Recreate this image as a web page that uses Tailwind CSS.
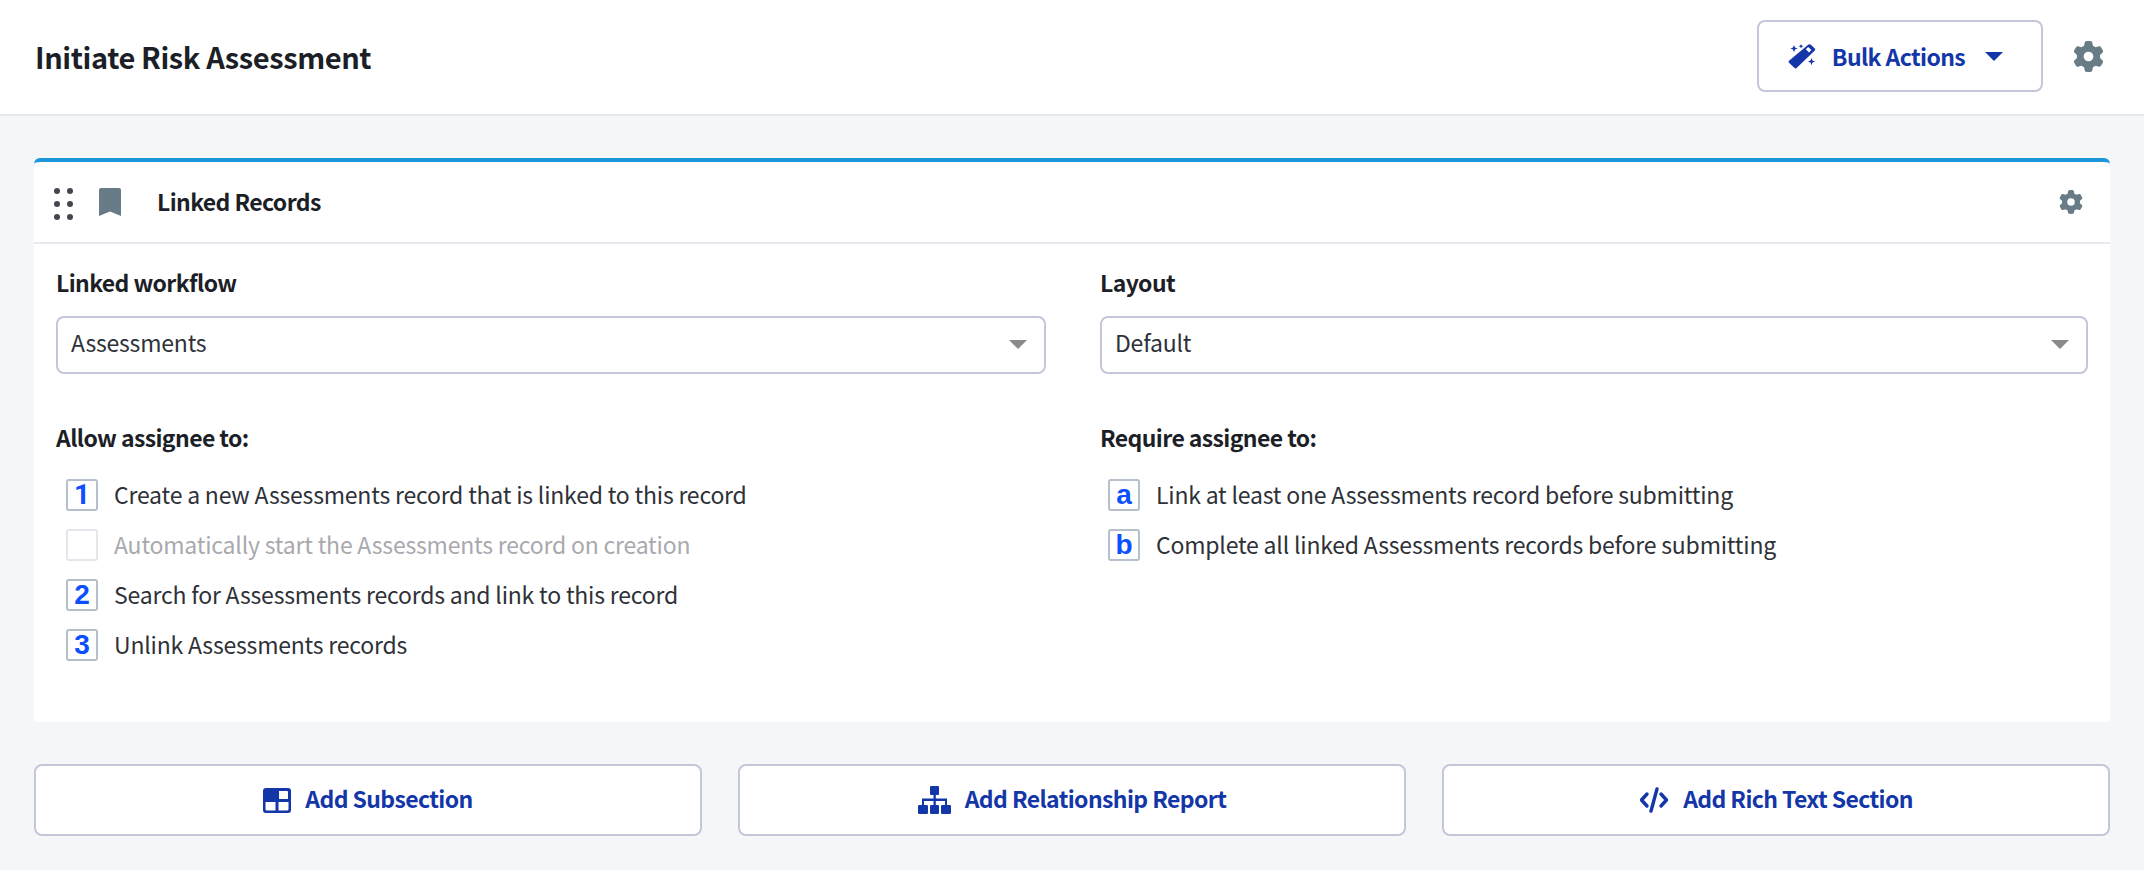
<!DOCTYPE html>
<html lang="en">
<head>
    <meta charset="UTF-8">
    <title>Initiate Risk Assessment</title>
    <script src="https://cdn.jsdelivr.net/npm/@tailwindcss/browser@4"></script>
</head>
<body class="h-[870px] overflow-hidden bg-[#f5f6f8] font-['Noto_Sans_CJK_JP',sans-serif] text-[#1c1f27]">
    <!-- page header -->
    <header class="h-[116px] bg-white border-b-2 border-[#e6e9f0] flex items-center justify-between pl-[35px] pr-[40px]">
        <h1 class="text-[29px] leading-[40px] font-bold tracking-[-0.4px] -mt-[3px]">Initiate Risk Assessment</h1>
        <div class="flex items-center gap-[30px] -mt-[2px]">
            <button class="w-[286px] h-[72px] bg-white border-2 border-[#c3c8d9] rounded-[8px] flex items-center justify-center text-[#1336a8] text-[23px] font-bold tracking-[-0.6px]">
                <svg class="w-[28px] h-[25px] mr-[16px]" viewBox="0 0 28 25" fill="#1336a8">
                    <path fill-rule="evenodd" d="M20.5 .6 a1.5 1.5 0 0 1 2 0 L26.8 4.6 a1.5 1.5 0 0 1 0 2 L8.6 24 a1.5 1.5 0 0 1 -2 0 L1 18.8 a1.5 1.5 0 0 1 0 -2 Z M20.2 3 L17.8 5.3 L21 8.4 L23.4 6 Z"/>
                    <path d="M6 1 l1 2.6 l2.6 1 l-2.6 1 l-1 2.6 l-1 -2.6 l-2.6 -1 l2.6 -1 Z M13 0 l.7 1.6 l1.6 .7 l-1.6 .7 l-.7 1.6 l-.7 -1.6 l-1.6 -.7 l1.6 -.7 Z M23.5 14 l1 2.6 l2.6 1 l-2.6 1 l-1 2.6 l-1 -2.6 l-2.6 -1 l2.6 -1 Z"/>
                </svg>
                <span>Bulk Actions</span>
                <span class="ml-[20px] mr-[9px] w-0 h-0 border-x-[9px] border-x-transparent border-t-[9px] border-t-[#1336a8]"></span>
            </button>
            <svg class="w-[31px] h-[31px]" viewBox="0 0 512 512" fill="#687c87"><path d="M495.9 166.6c3.2 8.7 .5 18.4-6.4 24.6l-43.3 39.4c1.1 8.3 1.7 16.8 1.7 25.4s-.6 17.1-1.7 25.4l43.3 39.4c6.9 6.2 9.6 15.9 6.4 24.6c-4.4 11.9-9.7 23.3-15.8 34.3l-4.7 8.1c-6.6 11-14 21.4-22.1 31.2c-5.9 7.2-15.7 9.6-24.5 6.8l-55.7-17.7c-13.4 10.3-28.2 18.9-44 25.4l-12.5 57.1c-2 9.1-9 16.3-18.2 17.8c-13.8 2.3-28 3.5-42.5 3.5s-28.7-1.2-42.5-3.5c-9.2-1.5-16.2-8.7-18.2-17.8l-12.5-57.1c-15.8-6.5-30.6-15.1-44-25.4L83.1 425.9c-8.8 2.8-18.6 .3-24.5-6.8c-8.1-9.8-15.5-20.2-22.1-31.2l-4.7-8.1c-6.1-11-11.4-22.4-15.8-34.3c-3.2-8.7-.5-18.4 6.4-24.6l43.3-39.4C64.6 273.1 64 264.6 64 256s.6-17.1 1.7-25.4L22.4 191.2c-6.9-6.2-9.6-15.9-6.4-24.6c4.4-11.9 9.7-23.3 15.8-34.3l4.7-8.1c6.6-11 14-21.4 22.1-31.2c5.9-7.2 15.7-9.6 24.5-6.8l55.7 17.7c13.4-10.3 28.2-18.9 44-25.4l12.5-57.1c2-9.1 9-16.3 18.2-17.8C227.3 1.2 241.5 0 256 0s28.7 1.2 42.5 3.5c9.2 1.5 16.2 8.7 18.2 17.8l12.5 57.1c15.8 6.5 30.6 15.1 44 25.4l55.7-17.7c8.8-2.8 18.6-.3 24.5 6.8c8.1 9.8 15.5 20.2 22.1 31.2l4.7 8.1c6.1 11 11.4 22.4 15.8 34.3zM256 336a80 80 0 1 0 0-160 80 80 0 1 0 0 160z"/></svg>
        </div>
    </header>

    <main class="px-[34px] pt-[42px]">
        <!-- linked records card -->
        <section class="h-[564px] bg-white border-t-4 border-[#1a96d9] rounded-t-[6px] rounded-b-[4px]">
            <div class="h-[82px] border-b-2 border-[#e6e9f0] flex items-center pl-[20px] pr-[27px]">
                <div class="grid grid-cols-2 gap-x-[7px] gap-y-[7px] w-[19px] mt-[3px]">
                    <span class="w-[6px] h-[6px] rounded-full bg-[#43464f]"></span><span class="w-[6px] h-[6px] rounded-full bg-[#43464f]"></span>
                    <span class="w-[6px] h-[6px] rounded-full bg-[#43464f]"></span><span class="w-[6px] h-[6px] rounded-full bg-[#43464f]"></span>
                    <span class="w-[6px] h-[6px] rounded-full bg-[#43464f]"></span><span class="w-[6px] h-[6px] rounded-full bg-[#43464f]"></span>
                </div>
                <svg class="w-[22px] h-[28px] ml-[26px]" viewBox="0 0 22 28" fill="#687c87"><path d="M2 0 H20 a2 2 0 0 1 2 2 V28 L11 23.5 L0 28 V2 a2 2 0 0 1 2 -2 Z"/></svg>
                <h2 class="ml-[36px] text-[23px] leading-[32px] font-bold tracking-[-0.6px] -mt-[2px]">Linked Records</h2>
                <svg class="ml-auto w-[24px] h-[24px]" viewBox="0 0 512 512" fill="#687c87"><path d="M495.9 166.6c3.2 8.7 .5 18.4-6.4 24.6l-43.3 39.4c1.1 8.3 1.7 16.8 1.7 25.4s-.6 17.1-1.7 25.4l43.3 39.4c6.9 6.2 9.6 15.9 6.4 24.6c-4.4 11.9-9.7 23.3-15.8 34.3l-4.7 8.1c-6.6 11-14 21.4-22.1 31.2c-5.9 7.2-15.7 9.6-24.5 6.8l-55.7-17.7c-13.4 10.3-28.2 18.9-44 25.4l-12.5 57.1c-2 9.1-9 16.3-18.2 17.8c-13.8 2.3-28 3.5-42.5 3.5s-28.7-1.2-42.5-3.5c-9.2-1.5-16.2-8.7-18.2-17.8l-12.5-57.1c-15.8-6.5-30.6-15.1-44-25.4L83.1 425.9c-8.8 2.8-18.6 .3-24.5-6.8c-8.1-9.8-15.5-20.2-22.1-31.2l-4.7-8.1c-6.1-11-11.4-22.4-15.8-34.3c-3.2-8.7-.5-18.4 6.4-24.6l43.3-39.4C64.6 273.1 64 264.6 64 256s.6-17.1 1.7-25.4L22.4 191.2c-6.9-6.2-9.6-15.9-6.4-24.6c4.4-11.9 9.7-23.3 15.8-34.3l4.7-8.1c6.6-11 14-21.4 22.1-31.2c5.9-7.2 15.7-9.6 24.5-6.8l55.7 17.7c13.4-10.3 28.2-18.9 44-25.4l12.5-57.1c2-9.1 9-16.3 18.2-17.8C227.3 1.2 241.5 0 256 0s28.7 1.2 42.5 3.5c9.2 1.5 16.2 8.7 18.2 17.8l12.5 57.1c15.8 6.5 30.6 15.1 44 25.4l55.7-17.7c8.8-2.8 18.6-.3 24.5 6.8c8.1 9.8 15.5 20.2 22.1 31.2l4.7 8.1c6.1 11 11.4 22.4 15.8 34.3zM256 336a80 80 0 1 0 0-160 80 80 0 1 0 0 160z"/></svg>
            </div>

            <div class="grid grid-cols-[990px_988px] gap-x-[54px] px-[22px] pt-[23px]">
                <!-- left column -->
                <div>
                    <label class="block text-[23px] leading-[30px] font-bold tracking-[-0.6px]">Linked workflow</label>
                    <div class="mt-[19px] h-[58px] border-2 border-[#c3c8d9] rounded-[8px] flex items-center justify-between pl-[13px] pr-[17px] text-[23px] tracking-[-0.2px] text-[#2e3138]">
                        <span class="-mt-[5px]">Assessments</span>
                        <span class="w-0 h-0 border-x-[9px] border-x-transparent border-t-[9px] border-t-[#8a8a8a] -mt-[2px]"></span>
                    </div>
                    <h3 class="mt-[48px] text-[23px] leading-[30px] font-bold tracking-[-0.6px]">Allow assignee to:</h3>
                    <ul class="mt-[27px] pl-[10px] flex flex-col gap-[18px] text-[23px] tracking-[-0.2px] text-[#2e3138]">
                        <li class="h-[32px] flex items-center gap-[16px]">
                            <span class="w-[32px] h-[32px] bg-white border-2 border-[#b6bfcc] rounded-[3px] flex items-center justify-center font-['Roboto',sans-serif] font-bold text-[28px] leading-none tracking-normal text-[#0b4fff]">1</span>
                            <span class="-mt-[1px]">Create a new Assessments record that is linked to this record</span>
                        </li>
                        <li class="h-[32px] flex items-center gap-[16px] text-[#a8a9ae]">
                            <span class="w-[32px] h-[32px] bg-white border-2 border-[#e3e6ec] rounded-[3px]"></span>
                            <span class="-mt-[1px]">Automatically start the Assessments record on creation</span>
                        </li>
                        <li class="h-[32px] flex items-center gap-[16px]">
                            <span class="w-[32px] h-[32px] bg-white border-2 border-[#b6bfcc] rounded-[3px] flex items-center justify-center font-['Liberation_Sans',sans-serif] font-bold text-[28px] leading-none tracking-normal text-[#0b4fff]">2</span>
                            <span class="-mt-[1px]">Search for Assessments records and link to this record</span>
                        </li>
                        <li class="h-[32px] flex items-center gap-[16px]">
                            <span class="w-[32px] h-[32px] bg-white border-2 border-[#b6bfcc] rounded-[3px] flex items-center justify-center font-['Liberation_Sans',sans-serif] font-bold text-[28px] leading-none tracking-normal text-[#0b4fff]">3</span>
                            <span class="-mt-[1px]">Unlink Assessments records</span>
                        </li>
                    </ul>
                </div>
                <!-- right column -->
                <div>
                    <label class="block text-[23px] leading-[30px] font-bold tracking-[-0.6px]">Layout</label>
                    <div class="mt-[19px] h-[58px] border-2 border-[#c3c8d9] rounded-[8px] flex items-center justify-between pl-[13px] pr-[17px] text-[23px] tracking-[-0.2px] text-[#2e3138]">
                        <span class="-mt-[5px]">Default</span>
                        <span class="w-0 h-0 border-x-[9px] border-x-transparent border-t-[9px] border-t-[#8a8a8a] -mt-[2px]"></span>
                    </div>
                    <h3 class="mt-[48px] text-[23px] leading-[30px] font-bold tracking-[-0.6px]">Require assignee to:</h3>
                    <ul class="mt-[27px] pl-[8px] flex flex-col gap-[18px] text-[23px] tracking-[-0.2px] text-[#2e3138]">
                        <li class="h-[32px] flex items-center gap-[16px]">
                            <span class="w-[32px] h-[32px] bg-white border-2 border-[#b6bfcc] rounded-[3px] flex items-center justify-center font-['Liberation_Sans',sans-serif] font-bold text-[28px] leading-none tracking-normal text-[#0b4fff]">a</span>
                            <span class="-mt-[1px]">Link at least one Assessments record before submitting</span>
                        </li>
                        <li class="h-[32px] flex items-center gap-[16px]">
                            <span class="w-[32px] h-[32px] bg-white border-2 border-[#b6bfcc] rounded-[3px] flex items-center justify-center font-['Liberation_Sans',sans-serif] font-bold text-[28px] leading-none tracking-normal text-[#0b4fff]">b</span>
                            <span class="-mt-[1px]">Complete all linked Assessments records before submitting</span>
                        </li>
                    </ul>
                </div>
            </div>
        </section>

        <!-- add section buttons -->
        <div class="mt-[42px] grid grid-cols-3 gap-[36px]">
            <button class="h-[72px] bg-white border-2 border-[#c3c8d9] rounded-[8px] flex items-center justify-center gap-[14px] text-[#1336a8] text-[23px] font-bold tracking-[-0.6px]">
                <svg class="w-[28px] h-[25px]" viewBox="0 0 28 25" fill="#1336a8"><path fill-rule="evenodd" d="M3 0 H25 a3 3 0 0 1 3 3 V22 a3 3 0 0 1 -3 3 H3 a3 3 0 0 1 -3 -3 V3 a3 3 0 0 1 3 -3 Z M16 3 V11 H25 V4 a1 1 0 0 0 -1 -1 Z M2.5 14 V21 a1.5 1.5 0 0 0 1.5 1.5 H12.5 V14 Z M15.5 14 V22.5 H24 a1.5 1.5 0 0 0 1.5 -1.5 V14 Z"/></svg>
                <span class="-mt-[3px]">Add Subsection</span>
            </button>
            <button class="h-[72px] bg-white border-2 border-[#c3c8d9] rounded-[8px] flex items-center justify-center gap-[14px] text-[#1336a8] text-[23px] font-bold tracking-[-0.6px]">
                <svg class="w-[33px] h-[28px]" viewBox="0 0 33 28" fill="#1336a8"><path d="M13 0 H20 a1 1 0 0 1 1 1 V8 a1 1 0 0 1 -1 1 H17.8 V12.5 H29 V19 H27 V15 H17.8 V19 H15.5 V15 H6 V19 H4 V12.5 H15.5 V9 H13 a1 1 0 0 1 -1 -1 V1 a1 1 0 0 1 1 -1 Z"/><rect x="0" y="19" width="10" height="9" rx="1.2"/><rect x="12" y="19" width="9" height="9" rx="1.2"/><rect x="23" y="19" width="10" height="9" rx="1.2"/></svg>
                <span class="-mt-[3px]">Add Relationship Report</span>
            </button>
            <button class="h-[72px] bg-white border-2 border-[#c3c8d9] rounded-[8px] flex items-center justify-center gap-[14px] text-[#1336a8] text-[23px] font-bold tracking-[-0.6px]">
                <svg class="w-[30px] h-[26px]" viewBox="0 0 30 26" fill="none" stroke="#1336a8" stroke-width="3.4" stroke-linecap="round" stroke-linejoin="round"><path d="M8 7 L2.5 13 L8 19"/><path d="M22 7 L27.5 13 L22 19"/><path d="M18 2 L12 24"/></svg>
                <span class="-mt-[3px]">Add Rich Text Section</span>
            </button>
        </div>
    </main>
</body>
</html>
